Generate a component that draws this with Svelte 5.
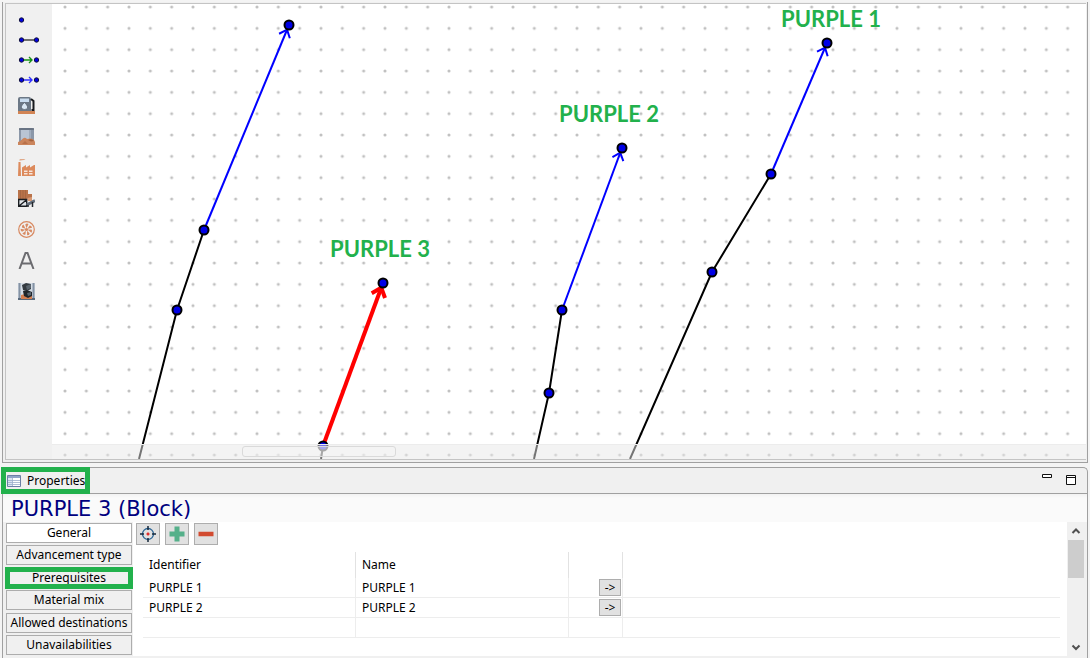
<script>
  const paths = [
    { nodes: [[87, 455], [125, 306], [152, 226], [237, 21]], color: '#0000ff', width: 2 },
    { nodes: [[269, 455], [271, 442], [331, 279]], color: '#ff0000', width: 4 },
    { nodes: [[482, 455], [497, 389], [510, 306], [570, 144]], color: '#0000ff', width: 2 },
    { nodes: [[578, 455], [660, 268], [719, 170], [775, 39]], color: '#0000ff', width: 2 }
  ];

  const labels = [
    { text: 'PURPLE 1', x: 779, y: 23 },
    { text: 'PURPLE 2', x: 557, y: 118 },
    { text: 'PURPLE 3', x: 328, y: 253 }
  ];

  const points = (list) => list.map((p) => p.join(',')).join(' ');

  function arrowHead(nodes, length) {
    const [a, b] = nodes.slice(-2);
    const angle = Math.atan2(b[1] - a[1], b[0] - a[0]);
    const tip = [b[0] - 5 * Math.cos(angle), b[1] - 5 * Math.sin(angle)];
    const wing = (turn) => [
      tip[0] - length * Math.cos(angle + turn),
      tip[1] - length * Math.sin(angle + turn)
    ];
    return points([wing(0.7), tip, wing(-0.7)]);
  }

  const tabs = ['General', 'Advancement type', 'Prerequisites', 'Material mix', 'Allowed destinations', 'Unavailabilities'];
  let active = $state('General');
  const rows = ['PURPLE 1', 'PURPLE 2'];
</script>

<div class="page">
  <section class="panel editor">
    <div class="inner">
      <nav class="palette" aria-label="Palette">
        <button class="small" aria-label="Node">
          <svg width="22" height="20"><circle cx="3.5" cy="10" r="2.2" /></svg>
        </button>
        <button class="small" aria-label="Segment">
          <svg width="22" height="20"><path d="M3 10h15" stroke="#444" stroke-width="1.5" /><circle cx="3.5" cy="10" r="2.2" /><circle cx="18.5" cy="10" r="2.2" /></svg>
        </button>
        <button class="small" aria-label="Green arc">
          <svg width="22" height="20"><path d="M5 10h9M11 7l3 3l-3 3" stroke="#169016" stroke-width="1.4" fill="none" /><circle cx="3.5" cy="10" r="2.2" /><circle cx="18.5" cy="10" r="2.2" /></svg>
        </button>
        <button class="small" aria-label="Blue arc">
          <svg width="22" height="20"><path d="M5 10h9M11 7l3 3l-3 3" stroke="#3030ff" stroke-width="1.4" fill="none" /><circle cx="3.5" cy="10" r="2.2" /><circle cx="18.5" cy="10" r="2.2" /></svg>
        </button>
        <button aria-label="Fuel station">
          <svg width="17" height="17">
            <path d="M0 2Q0 0 2 0h9q2 0 2 2v12H0z" fill="#6c7886" />
            <path d="M2 1.500h9v3.500h-9z" fill="#c9dcef" />
            <path d="M6.500 5.500q5 5 2 6.500q-2 1-4 0q-3-2 2-6.500" fill="#dbe8f4" stroke="#4b5663" stroke-width=".6" />
            <path d="M13 2l2.500 2v9h-2" fill="none" stroke="#16181c" stroke-width="2" />
            <path d="M0 14h17v3H0z" fill="#d28454" />
          </svg>
        </button>
        <button aria-label="Stockpile">
          <svg width="17" height="17">
            <path d="M1 1.500Q1 0 3 0h11q2 0 2 1.500V14H1z" fill="#8b97a8" />
            <path d="M3 2h8v10H3z" fill="#b9c5d4" /><path d="M11 2h2v10h-2z" fill="#a0adbe" />
            <path d="M1 1h15" stroke="#5e6978" stroke-width="1.500" />
            <path d="M0 17v-3q3-1 5-3.500q2-1.500 4 .5q5-1.500 7 1l1 2v3z" fill="#cb855c" />
            <path d="M10 12q4-2 6 1l-3 .5z" fill="#a5623c" /><path d="M4 16l3-3l3 3z" fill="#b87048" />
          </svg>
        </button>
        <button aria-label="Factory">
          <svg width="17" height="17">
            <path d="M0 17L.5 3h2L3 17z" fill="#dc8a5c" />
            <path d="M4 17V8.500l4-2.500v2.500l4-2.500v2.500l4-2.500h1v11z" fill="#dc8a5c" />
            <path d="M2 1.500q0-1 2-1t3-1" stroke="#e0a98a" stroke-width="1.500" fill="none" />
            <path d="M6 11.500h3.500v1.500H6zM11 11.500h3.500v1.500H11zM6 14h3.500v1.500H6zM11 14h3.500v1.500H11z" fill="#f7e5dc" />
          </svg>
        </button>
        <button aria-label="Crusher">
          <svg width="17" height="17">
            <path d="M0 0h10v4h4v5H0z" fill="#b9734a" />
            <path d="M2.500 0v9M5 0v9M7.500 0v9" stroke="#9e6240" stroke-width=".7" />
            <path d="M9 8l5-1v4h-4z" fill="#d89872" />
            <path d="M.7 9.500h8v6.800h-8zM1 16l8-6.500" fill="#e2e6ea" stroke="#1b1e22" stroke-width="1.400" />
            <path d="M8.500 15L17 10.500" stroke="#606b78" stroke-width="3" /><path d="M8 16h3M14.500 12v5" stroke="#22262b" stroke-width="1.500" />
          </svg>
        </button>
        <button aria-label="Ventilation">
          <svg width="17" height="17">
            <circle class="ring" cx="8.500" cy="8.500" r="7.800" />
            {#each [0, 51.4, 102.9, 154.3, 205.7, 257.1, 308.6] as turn}
              <path d="M8.500 7.200L7.300 3.600Q8.500 2 10.500 3z" fill="#d88a62" transform="rotate({turn} 8.5 8.5)" />
            {/each}
            <circle class="hub" cx="8.500" cy="8.500" r="1.600" />
          </svg>
        </button>
        <button aria-label="Text">
          <svg width="17" height="17"><path d="M1.500 17L7.500 1h2l6 16M4 11.500h9" fill="none" stroke="#6c6c70" stroke-width="2" /></svg>
        </button>
        <button aria-label="Ore pass">
          <svg width="17" height="17">
            <path d="M0 0h17v17H0z" fill="#d5dde6" /><path d="M1.500 0v16M15.500 0v16" stroke="#8492a3" stroke-width="2" />
            <path d="M0 16h17" stroke="#58697c" stroke-width="2" />
            <path d="M3 12l4-1l6 2l1-2v5H3z" fill="#d67f50" />
            <path d="M4 2l4-2l5 1v5l-4 2l-4-1z" fill="#343a40" /><path d="M5 8l4-1l5 2v4l-4 2l-4-2z" fill="#20252a" />
            <path d="M8 3l5-2v4l-4 2zM9 10l4-1v3l-3 1z" fill="#59646d" />
          </svg>
        </button>
      </nav>

      <div class="canvas">
        <svg width="100%" height="100%" role="img" aria-label="Block network">
          <defs>
            <pattern id="grid" x="2.333" y="-7.667" width="21.333" height="21.333" patternUnits="userSpaceOnUse">
              <circle class="dot" cx="10.667" cy="10.667" r="1.500" />
            </pattern>
          </defs>
          <rect width="100%" height="100%" fill="url(#grid)" />
          {#each paths as path}
            <polyline points={points(path.nodes.slice(0, -1))} fill="none" stroke="#000" stroke-width="2" />
            <polyline points={points(path.nodes.slice(-2))} fill="none" stroke={path.color} stroke-width={path.width} />
            <polyline points={arrowHead(path.nodes, path.width + 7)} fill="none" stroke={path.color} stroke-width={path.width} />
            {#each path.nodes.slice(1) as [x, y]}
              <circle class="node" cx={x} cy={y} r="4.500" />
            {/each}
          {/each}
          {#each labels as label}
            <text x={label.x} y={label.y} text-anchor="middle">{label.text}</text>
          {/each}
        </svg>
        <div class="hbar"><div class="hthumb"></div></div>
      </div>
    </div>
  </section>

  <section class="panel properties">
    <header>
      <div class="viewtab">
        <svg width="14" height="12">
          <path d="M.5.5h13v11H.5z" fill="#fff" stroke="#6b7fa5" />
          <path d="M1 1h12v2H1z" fill="#90a4c8" /><path d="M1 3h4v8H1z" fill="#dce5f3" />
          <path d="M1 5.500h12M1 7.500h12M1 9.500h12M5.500 3v8" stroke="#9badca" stroke-width=".8" />
        </svg>
        <span>Properties</span>
      </div>
      <div class="window">
        <button aria-label="Minimize"><svg width="12" height="12"><path d="M1.500 2.500h9v3h-9z" fill="#fff" stroke="#111" /></svg></button>
        <button aria-label="Maximize"><svg width="12" height="12"><path d="M1.500 1.500h9v9h-9zM1 3.500h10" fill="#fff" stroke="#111" /></svg></button>
      </div>
    </header>
    <h1>PURPLE 3 (Block)</h1>
    <div class="body">
      <nav class="tabs" aria-label="Sections">
        {#each tabs as tab}
          <button class:active={active === tab} class:marked={tab === 'Prerequisites'} onclick={() => (active = tab)}>{tab}</button>
        {/each}
      </nav>
      <div class="content">
        <div class="tools">
          <button aria-label="Locate">
            <svg width="16" height="16"><circle class="aim" cx="8" cy="8" r="5.500" /><path d="M8 0v4M8 12v4M0 8h4M12 8h4" stroke="#16273a" stroke-width="1.500" /><path d="M6.500 8h3M8 6.500v3" stroke="#e02020" stroke-width="1.500" /></svg>
          </button>
          <button aria-label="Add"><svg width="16" height="16"><path d="M8 .5v15M.5 8h15" stroke="#55b08a" stroke-width="5" /></svg></button>
          <button aria-label="Remove"><svg width="16" height="16"><path d="M.5 8h15" stroke="#d24b30" stroke-width="4.500" /></svg></button>
        </div>
        <table>
          <colgroup><col class="id" /><col class="name" /><col class="go" /><col /></colgroup>
          <thead>
            <tr><th>Identifier</th><th>Name</th><th></th><th></th></tr>
          </thead>
          <tbody>
            {#each rows as row}
              <tr><td>{row}</td><td>{row}</td><td class="action"><button aria-label="Open {row}">-&gt;</button></td><td></td></tr>
            {/each}
            <tr><td></td><td></td><td></td><td></td></tr>
          </tbody>
        </table>
      </div>
      <div class="vbar">
        <svg width="10" height="18"><path d="M1.500 11L5 7.500L8.500 11" /></svg>
        <div class="vthumb"></div>
        <svg width="10" height="18"><path d="M1.500 7.500L5 11L8.500 7.500" /></svg>
      </div>
    </div>
  </section>
</div>

<style>
  :global(body) { margin: 0; background: #f4f4f4; }
  * { box-sizing: border-box; }
  button { margin: 0; padding: 0; font: inherit; color: inherit; border: 0; background: none; }
  svg { display: block; }
  .page {
    display: flex; flex-direction: column; gap: 4px;
    min-height: 100vh; padding: 2px 2px 0;
    font: 12px/16px "Noto Sans", "Open Sans", sans-serif; color: #000;
  }
  .panel { border: 1px solid #a0a0a0; background: #f0f0f0; }
  .editor { flex: 1; display: flex; border-top: 0; padding: 1px 1px 2px 2px; }
  .inner { flex: 1; display: flex; border: solid #c4c4c4; border-width: 1px 0 1px 1px; }
  .palette { width: 46px; padding: 6px 0 0 12px; display: flex; flex-direction: column; }
  .palette button { height: 31px; display: flex; align-items: center; }
  .palette .small { height: 20px; }
  .palette .small circle { fill: #0000e0; stroke: #10103a; stroke-width: 1px; }
  .palette .ring { fill: none; stroke: #d88a62; stroke-width: 1.2px; }
  .palette .hub { fill: #d88a62; }
  .canvas { flex: 1; position: relative; background: #fff; overflow: hidden; }
  .canvas > svg { position: absolute; inset: 0; }
  .dot { fill: #c0c0c0; }
  .node { fill: #0000e6; stroke: #000; stroke-width: 2px; }
  text { font: 900 22px Lato, sans-serif; font-weight: 700; fill: #22b14c; }
  .hbar { position: absolute; left: 0; right: 0; bottom: 0; height: 15px; padding: 1px 0 2px 190px; background: rgba(232, 232, 232, .5); border-top: 1px solid #ececec; }
  .hthumb { width: 154px; height: 11px; border: 1px solid #dadada; border-radius: 3px; background: rgba(245, 245, 245, .4); }

  .properties { border-bottom: 0; border-radius: 0 5px 0 0; }
  header { height: 26px; display: flex; justify-content: space-between; border-bottom: 1px solid #a0a0a0; }
  .viewtab { display: flex; align-items: center; gap: 6px; height: 27px; margin: -1px 0 0 -2px; padding: 0 0 0 1px; border: 5px solid #22b14c; }
  .window { display: flex; gap: 12px; padding: 4px 10px 0 0; }
  .window button { width: 12px; height: 14px; display: flex; align-items: flex-start; }
  .window button:last-child { align-items: flex-end; }
  h1 { margin: 0; padding: 2px 8px 0; height: 28px; font: 21px/26px "DejaVu Sans", sans-serif; color: #00007f; background: linear-gradient(#f2f2f2, #fafafa 4px); }
  .body { display: flex; height: 136px; padding: 0 3px 2px 3px; }
  .tabs { width: 127px; height: 133px; padding: 1px 1px 0 0; display: flex; flex-direction: column; justify-content: space-between; }
  .tabs button { position: relative; height: 20px; border: 1px solid #adadad; background: #f0f0f0; line-height: 18px; white-space: nowrap; }
  .tabs .active { background: #fff; }
  .tabs .marked::after { content: ""; position: absolute; inset: -2px; border: 5px solid #22b14c; }
  .content { flex: 1; background: #fff; padding: 1px 7px 0 3px; }
  .tools { display: flex; gap: 5px; }
  .tools button { width: 24px; height: 22px; display: flex; align-items: center; justify-content: center; border: 1px solid #adadad; background: #e1e1e1; }
  .aim { fill: none; stroke: #2a6596; stroke-width: 1.3px; }
  table { width: calc(100% - 7px); margin: 7px 0 0 7px; border-collapse: separate; border-spacing: 0; table-layout: fixed; }
  .id, .name { width: 213px; }
  .go { width: 54px; }
  th { height: 26px; padding: 0 6px; font-weight: normal; text-align: left; border-right: 1px solid #e2e2e2; }
  td { height: 20px; padding: 0 6px; border: solid #ededed; border-width: 0 1px 1px 0; }
  th:last-child, td:last-child { border-right: 0; }
  .action { padding: 0 1px 0 0; text-align: right; }
  .action button { display: block; width: 22px; height: 17px; margin-left: auto; border: 1px solid #adadad; background: #e1e1e1; line-height: 14px; }
  .vbar { width: 17px; display: flex; flex-direction: column; align-items: center; background: #f0f0f0; }
  .vbar path { fill: none; stroke: #505050; stroke-width: 2px; }
  .vthumb { width: 16px; height: 38px; margin-bottom: auto; background: #cdcdcd; }
</style>
